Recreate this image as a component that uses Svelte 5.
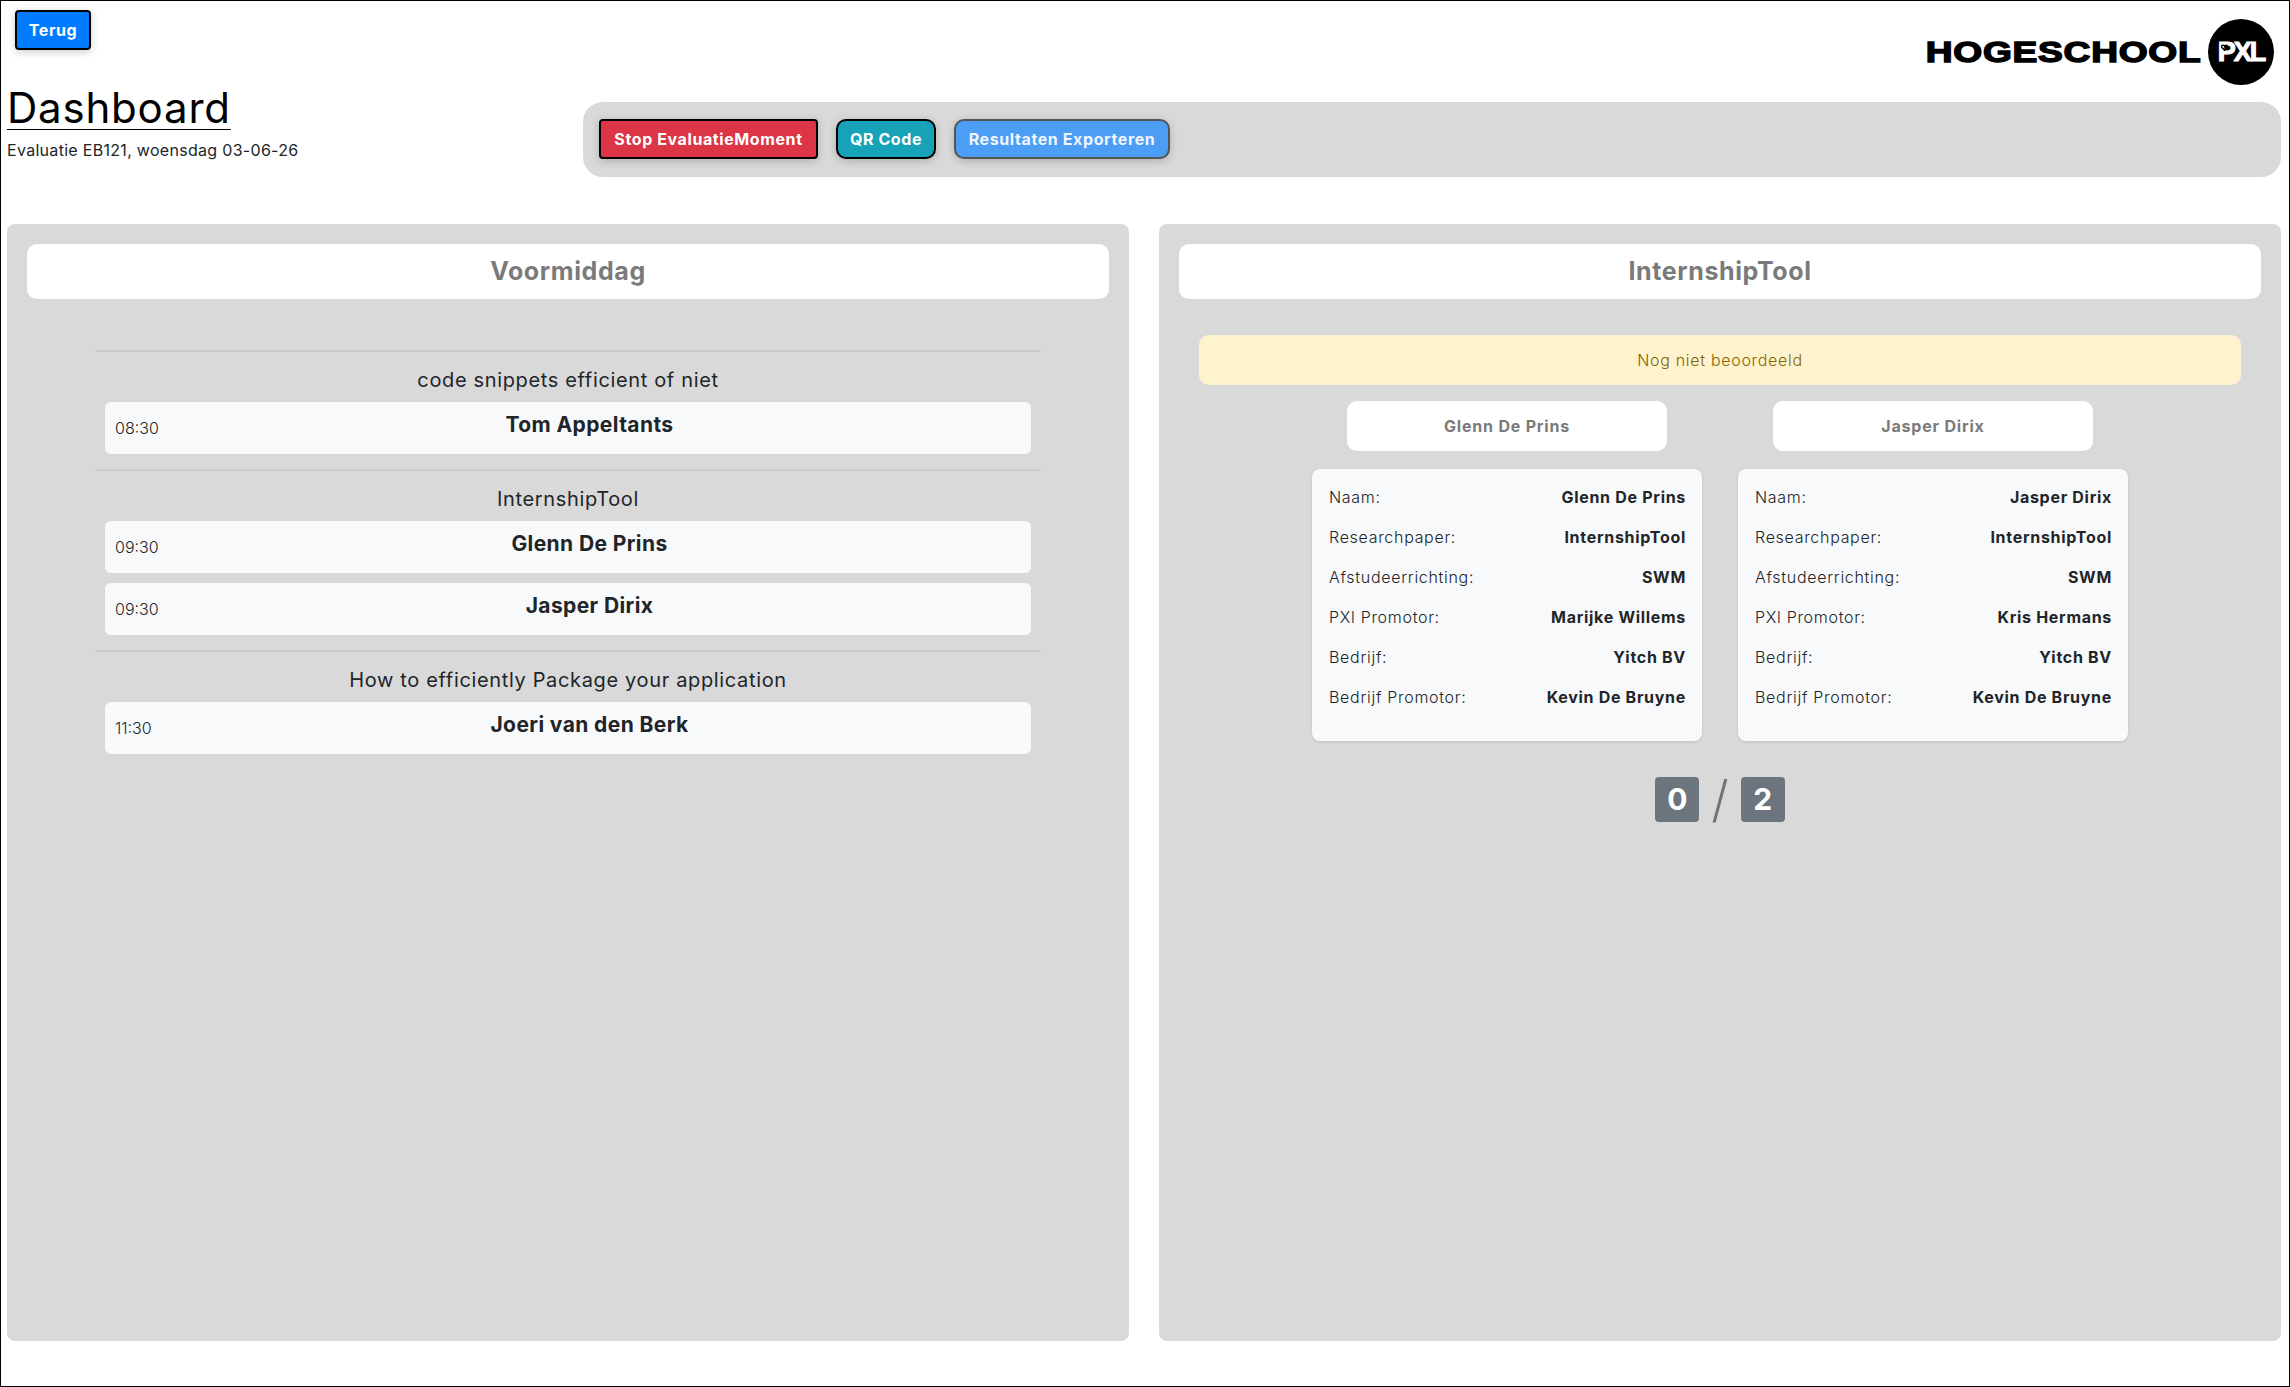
<script>
	const sessions = [
		{ title: 'code snippets efficient of niet', rows: [{ time: '08:30', name: 'Tom Appeltants' }] },
		{
			title: 'InternshipTool',
			rows: [
				{ time: '09:30', name: 'Glenn De Prins' },
				{ time: '09:30', name: 'Jasper Dirix' }
			]
		},
		{ title: 'How to efficiently Package your application', rows: [{ time: '11:30', name: 'Joeri van den Berk' }] }
	];

	const students = [
		{ name: 'Glenn De Prins', promotor: 'Marijke Willems' },
		{ name: 'Jasper Dirix', promotor: 'Kris Hermans' }
	];

	const details = (s) => [
		['Naam:', s.name],
		['Researchpaper:', 'InternshipTool'],
		['Afstudeerrichting:', 'SWM'],
		['PXl Promotor:', s.promotor],
		['Bedrijf:', 'Yitch BV'],
		['Bedrijf Promotor:', 'Kevin De Bruyne']
	];
</script>

<div class="page">
	<div class="topbar">
		<button class="btn back">Terug</button>
		<div class="logo">
			<span class="logo-text">HOGESCHOOL</span>
			<span class="logo-circle">
				<span class="pxl">PXL</span>
				<svg class="heart" viewBox="0 0 10 10"><path d="M5 9 1 4.600C-.2 2.600 2.800.2 5 2.800 7.200.2 10.200 2.600 9 4.600Z" fill="none" stroke="#000" stroke-width="2" /></svg>
			</span>
		</div>
	</div>

	<div class="header">
		<div class="heading">
			<h1>Dashboard</h1>
			<p>Evaluatie EB121, woensdag 03-06-26</p>
		</div>
		<div class="toolbar">
			<button class="btn stop">Stop EvaluatieMoment</button>
			<button class="btn qr">QR Code</button>
			<button class="btn export">Resultaten Exporteren</button>
		</div>
	</div>

	<div class="columns">
		<section class="panel">
			<h2 class="panel-title">Voormiddag</h2>
			<div class="sessions">
				{#each sessions as session}
					<div class="session">
						<h3>{session.title}</h3>
						{#each session.rows as row}
							<div class="slot">
								<span class="time">{row.time}</span>
								<strong>{row.name}</strong>
							</div>
						{/each}
					</div>
				{/each}
			</div>
		</section>

		<section class="panel">
			<h2 class="panel-title">InternshipTool</h2>
			<div class="alert">Nog niet beoordeeld</div>
			<div class="students">
				{#each students as student}
					<div class="student">
						<div class="student-title">{student.name}</div>
						<div class="card">
							{#each details(student) as [label, value]}
								<div class="line">
									<span>{label}</span>
									<b>{value}</b>
								</div>
							{/each}
						</div>
					</div>
				{/each}
			</div>
			<div class="score">
				<span class="badge">0</span>
				<span class="slash">/</span>
				<span class="badge">2</span>
			</div>
		</section>
	</div>
</div>

<style>
	:global(body) {
		margin: 0;
		background: #fff;
	}

	.page {
		box-sizing: border-box;
		height: 1387px;
		border: 1px solid #000;
		padding: 0 5px 0 6px;
		font-family: Inter, 'Liberation Sans', sans-serif;
		color: #212529;
		overflow: hidden;
	}

	.topbar {
		display: flex;
		justify-content: space-between;
		align-items: flex-start;
		height: 84px;
		padding-left: 8px;
		padding-top: 9px;
		box-sizing: border-box;
	}

	.btn {
		font-family: inherit;
		font-size: 16px;
		font-weight: 700;
		color: #fff;
		height: 40px;
		padding: 0;
		border: 2px solid #000;
		border-radius: 4px;
		box-shadow: 0 2px 8px rgba(0, 0, 0, 0.2);
		letter-spacing: 0.6px;
		white-space: nowrap;
	}

	.back {
		width: 76px;
		background: #007bff;
	}

	.logo {
		display: flex;
		align-items: center;
		gap: 7px;
		margin-top: 9px;
		margin-right: 10px;
	}

	.logo-text {
		font-family: 'Liberation Sans', sans-serif;
		font-size: 29px;
		font-weight: 700;
		color: #000;
		-webkit-text-stroke: 1.4px #000;
		letter-spacing: 0.6px;
		transform: scaleX(1.28);
		transform-origin: right center;
		line-height: 1;
	}

	.logo-circle {
		position: relative;
		display: flex;
		align-items: center;
		justify-content: center;
		width: 66px;
		height: 66px;
		border-radius: 50%;
		background: #000;
	}

	.pxl {
		font-family: 'Liberation Sans', sans-serif;
		font-size: 27px;
		font-weight: 700;
		color: #fff;
		letter-spacing: -2px;
		-webkit-text-stroke: 1px #fff;
	}

	.heart {
		position: absolute;
		left: 13px;
		top: 25px;
		width: 7px;
		height: 7px;
	}

	.header {
		display: flex;
		align-items: flex-start;
		height: 139px;
	}

	.heading {
		width: 576px;
		flex-shrink: 0;
	}

	h1 {
		display: inline-block;
		margin: 1px 0 0;
		font-size: 42px;
		font-weight: 400;
		line-height: 43px;
		color: #000;
		border-bottom: 1px solid #000;
		letter-spacing: 0.8px;
	}

	.heading p {
		margin: 8px 0 0;
		font-size: 16px;
		line-height: 24px;
		letter-spacing: 0.3px;
	}

	.toolbar {
		flex: 1;
		display: flex;
		align-items: center;
		gap: 18px;
		height: 75px;
		margin-top: 17px;
		margin-right: 3px;
		padding: 0 0 2px 16px;
		box-sizing: border-box;
		background: #d9d9d9;
		border-radius: 20px;
	}

	.stop {
		width: 219px;
		background: #dc3545;
	}

	.qr {
		width: 100px;
		background: #17a2b8;
		border-radius: 10px;
	}

	.export {
		width: 216px;
		background: #4c9ef5;
		border-color: #555;
		border-radius: 10px;
		color: #eef5ff;
	}

	.columns {
		display: grid;
		grid-template-columns: 1122px 1122px;
		gap: 30px;
	}

	.panel {
		box-sizing: border-box;
		height: 1117px;
		padding: 20px;
		background: #d9d9d9;
		border-radius: 8px;
	}

	.panel-title {
		margin: 0;
		height: 55px;
		line-height: 55px;
		text-align: center;
		font-size: 25px;
		font-weight: 700;
		color: #7a7a7a;
		background: #fff;
		border-radius: 10px;
		letter-spacing: 0.6px;
	}

	.sessions {
		margin: 51px 68px 0;
	}

	.session {
		border-top: 2px solid #cbcbcb;
		padding: 0 10px 15px;
	}

	.session h3 {
		margin: 0;
		height: 50px;
		line-height: 57px;
		text-align: center;
		font-size: 20px;
		font-weight: 400;
		letter-spacing: 0.65px;
	}

	.slot {
		position: relative;
		display: flex;
		align-items: center;
		height: 52px;
		margin-bottom: 10px;
		padding-left: 10px;
		background: #f8f9fa;
		border-radius: 6px;
	}

	.slot:last-child {
		margin-bottom: 0;
	}

	.time {
		font-size: 16px;
		font-weight: 300;
		margin-top: 0;
		width: 60px;
	}

	.slot strong {
		flex: 1;
		text-align: center;
		font-size: 21px;
		font-weight: 700;
		margin-top: -7px;
		padding-right: 27px;
		letter-spacing: 0.4px;
	}

	.alert {
		margin: 36px 20px 0;
		height: 50px;
		line-height: 50px;
		text-align: center;
		font-size: 16px;
		font-weight: 300;
		color: #856404;
		background: #fff3cd;
		border-radius: 10px;
		letter-spacing: 0.7px;
	}

	.students {
		display: flex;
		justify-content: center;
		gap: 36px;
		margin-top: 16px;
	}

	.student {
		width: 390px;
	}

	.student-title {
		width: 320px;
		height: 50px;
		line-height: 50px;
		margin: 0 auto 18px;
		text-align: center;
		font-size: 16px;
		font-weight: 700;
		color: #7a7a7a;
		background: #fff;
		border-radius: 10px;
		letter-spacing: 0.8px;
	}

	.card {
		box-sizing: border-box;
		height: 272px;
		padding: 8px 16px 8px 17px;
		background: #f8f9fa;
		border-radius: 8px;
		box-shadow: 0 1px 3px rgba(0, 0, 0, 0.12);
	}

	.line {
		display: flex;
		justify-content: space-between;
		align-items: center;
		height: 40px;
		font-size: 16px;
		font-weight: 300;
		letter-spacing: 0.7px;
	}

	.line b {
		font-weight: 700;
	}

	.score {
		display: flex;
		justify-content: center;
		align-items: center;
		gap: 12px;
		margin-top: 36px;
	}

	.badge {
		display: block;
		width: 44px;
		height: 45px;
		line-height: 45px;
		text-align: center;
		font-size: 30px;
		font-weight: 700;
		color: #fff;
		background: #6c757d;
		border-radius: 4px;
	}

	.slash {
		font-size: 50px;
		font-weight: 300;
		color: #6c757d;
		line-height: 45px;
	}
</style>
